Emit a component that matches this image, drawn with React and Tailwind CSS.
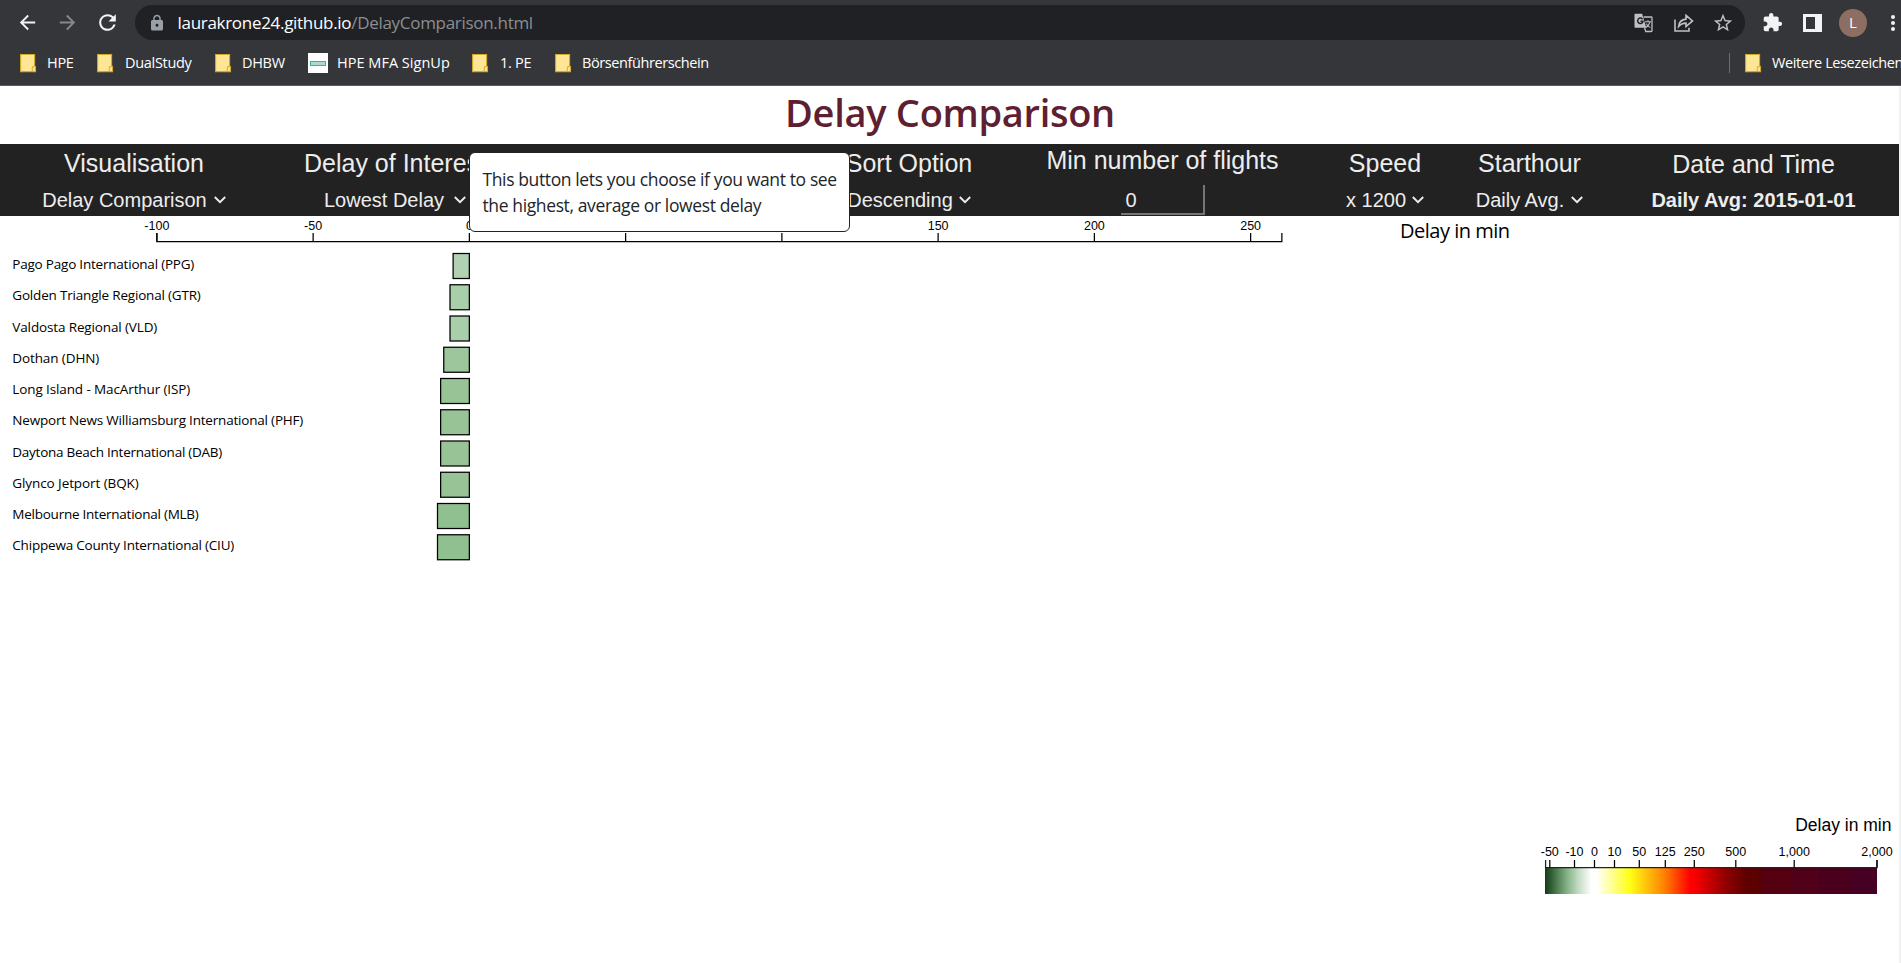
import React from "react";
import { MdArrowBack, MdArrowForward, MdRefresh, MdLock, MdStarBorder, MdExtension } from "react-icons/md";

const UI = "font-['Open_Sans','Noto_Sans',sans-serif]";
const ARIAL = "font-['Liberation_Sans',Arial,sans-serif]";

function FolderIcon() {
  return (
    <svg width="17" height="20" viewBox="0 0 17 20" className="shrink-0">
      <path d="M.6 1.5h14V13l.9.6v5H.6z" fill="#ffe694" stroke="#d2aa2c" strokeWidth="1.1" />
      <path d="M12.3 18.6v-3.4c0-1.4 1.2-1.8 2.3-1.8" fill="none" stroke="#d9b136" strokeWidth="1.1" />
    </svg>
  );
}

function SiteIcon() {
  return (
    <span className="flex h-5 w-5 shrink-0 items-center justify-center bg-white">
      <span className="h-[5px] w-4 border border-[#35b89a] bg-[#a5dccf]" />
    </span>
  );
}

function TranslateIcon() {
  return (
    <svg width="19" height="20" viewBox="0 0 19 20" className="shrink-0">
      <path d="M1.5.8h6.6l4.2 14H1.5C.9 14.800.5 14.300.5 13.800V1.800C.5 1.200.9.8 1.500.8z" fill="#bdc1c6" />
      <path d="M9.600 4h7.600c.5 0 .8.300.8.8v12.900c0 .5-.3.8-.8.8h-5.400l-1.300-3.700" fill="none" stroke="#bdc1c6" strokeWidth="1.300" />
      <path d="M8.500 6.200A2.700 2.700 0 1 0 9 8.300H6.500" fill="none" stroke="#202124" strokeWidth="1.500" />
      <path d="M11 8.800h6M14 7.300v1.500M16 8.900c-.6 2.300-2 4.200-4 5.600M12.300 10.600c.8 1.900 2.200 3.300 4 4" fill="none" stroke="#bdc1c6" strokeWidth="1.100" />
    </svg>
  );
}

function ShareIcon() {
  return (
    <svg width="20" height="18" viewBox="0 0 20 18" fill="none" stroke="#bdc1c6" strokeWidth="1.600" className="shrink-0">
      <path d="M1 5.500V17h14v-3.300" />
      <path d="M4.600 12.500c.4-4.500 3-7 7.400-7.400V1.300l6.500 5.600-6.500 5.600V9.100c-3.200.1-5.600 1.200-7.400 3.400z" />
    </svg>
  );
}

const bookmarks = [
  { label: "HPE", cls: "w-[77px] gap-[10px] tracking-[-0.3px]" },
  { label: "DualStudy", cls: "w-[118px] gap-[11px] tracking-[-0.3px]" },
  { label: "DHBW", cls: "w-[93px] gap-[10px] tracking-[-0.3px]" },
  { label: "HPE MFA SignUp", cls: "w-[164px] gap-[9px] tracking-[0.02px]", site: true },
  { label: "1. PE", cls: "w-[83px] gap-[11px] tracking-[-0.3px]" },
  { label: "Börsenführerschein", cls: "w-[170px] gap-[10px] tracking-[-0.4px]" },
];

function BrowserChrome() {
  return (
    <div className={"h-[86px] border-b border-[#5d5a5e] bg-[#35363a] " + UI}>
      <div className="flex h-[45px] items-center">
        <div className="flex w-[135px] shrink-0 items-center pb-px pl-[16px]">
          <MdArrowBack className="size-[23px] text-[#f1f3f4]" />
          <MdArrowForward className="ml-[17px] size-[23px] text-[#87888b]" />
          <MdRefresh className="ml-[16px] size-[25px] text-[#f1f3f4]" />
        </div>
        <div className="flex h-[35px] w-[1610px] shrink-0 items-center rounded-full bg-[#202124] pl-[13px] pr-[11.500px]">
          <MdLock className="size-[18px] text-[#9aa0a6]" />
          <span className="ml-[11.500px] text-[17px] tracking-[-0.3px] text-[#8b8e92]">
            <span className="text-white">laurakrone24.github.io</span>/DelayComparison.html
          </span>
          <div className="ml-auto flex items-center">
            <TranslateIcon />
            <span className="ml-[21px]"><ShareIcon /></span>
            <MdStarBorder className="ml-[18px] size-[22px] text-[#bdc1c6]" />
          </div>
        </div>
        <MdExtension className="ml-[17px] size-[21px] shrink-0 text-[#f1f3f4]" />
        <svg width="19" height="18" viewBox="0 0 19 18" className="ml-[20px] shrink-0">
          <path d="M0 0h19v18H0zM3 3v12h9V3z" fill="#f1f3f4" fillRule="evenodd" />
        </svg>
        <span className="ml-[17px] flex size-7 shrink-0 items-center justify-center rounded-full bg-[#8d6e63] text-[15px] text-white">L</span>
        <svg width="4" height="16" viewBox="0 0 4 16" className="ml-[23.500px] shrink-0" fill="#f1f3f4">
          <circle cx="2" cy="2" r="2" />
          <circle cx="2" cy="8" r="2" />
          <circle cx="2" cy="14" r="2" />
        </svg>
      </div>
      <div className="flex h-9 items-center overflow-hidden pl-5 text-[14.500px] text-white">
        {bookmarks.map((b) => (
          <div key={b.label} className={"flex shrink-0 items-center whitespace-nowrap " + b.cls}>
            {b.site ? <SiteIcon /> : <FolderIcon />}
            <span>{b.label}</span>
          </div>
        ))}
        <div className="ml-[1004px] h-5 w-px shrink-0 bg-[#6b6c70]" />
        <div className="ml-[15px] flex shrink-0 items-center gap-[10px] whitespace-nowrap tracking-[-0.400px]">
          <FolderIcon />
          <span>Weitere Lesezeichen</span>
        </div>
      </div>
    </div>
  );
}

function Chevron() {
  return (
    <svg width="12" height="8" viewBox="0 0 12 8" className="shrink-0" fill="none" stroke="#ededed" strokeWidth="1.900">
      <path d="M.8 1l5.200 5.200L11.200 1" />
    </svg>
  );
}

function Control({ title, value, width, gap = "gap-[7px]" }) {
  return (
    <div className={"flex shrink-0 flex-col items-center whitespace-nowrap pt-[5px] " + width}>
      <div className="text-[25px] leading-[29px]">{title}</div>
      <div className={"mt-[9px] flex items-center text-[20px] leading-[26px] " + gap}>
        <span>{value}</span>
        <Chevron />
      </div>
    </div>
  );
}

function Toolbar() {
  return (
    <div className={"relative flex h-[72px] w-[1899px] bg-[#222] text-[#ededed] " + ARIAL}>
      <Control title="Visualisation" value="Delay Comparison" width="w-[268px]" />
      <Control title="Delay of Interest" value="Lowest Delay" width="w-[254px]" gap="gap-[10px]" />
      <div className="w-[287px] shrink-0" />
      <Control title="Sort Option" value="Descending" width="w-[200px]" gap="gap-[6px]" />
      <div className="flex w-[307px] shrink-0 flex-col items-center whitespace-nowrap pt-[2px]">
        <div className="text-[25px] leading-[29px]">Min number of flights</div>
        <div className="mt-[10px] h-[30px] w-[84px] border-r-2 border-b-2 border-[#767676] pl-[5px] text-[20px] leading-[30px]">0</div>
      </div>
      <Control title="Speed" value="x 1200" width="w-[138px]" gap="gap-[6px]" />
      <Control title="Starthour" value="Daily Avg." width="w-[151px]" />
      <div className="flex w-[294px] shrink-0 flex-col items-center whitespace-nowrap pt-[6px] pl-[3px]">
        <div className="text-[25px] leading-[29px]">Date and Time</div>
        <div className="mt-[8px] text-[20px] font-bold leading-[26px]">Daily Avg: 2015-01-01</div>
      </div>
      <div className={"absolute left-[469px] top-[8px] z-10 h-[80px] w-[381px] whitespace-nowrap rounded-[6px] border border-[#222] bg-white pl-[12.500px] pt-[13px] text-[17.500px] leading-[26.250px] tracking-[-0.380px] text-[#212529] " + UI}>
        This button lets you choose if you want to see
        <br />
        the highest, average or lowest delay
      </div>
    </div>
  );
}

const airports = [
  { name: "Pago Pago International (PPG)", len: 181, base: 269, v: 5, fill: "#b1d1b2" },
  { name: "Golden Triangle Regional (GTR)", len: 187.500, base: 300, v: 6, fill: "#a9ceaa" },
  { name: "Valdosta Regional (VLD)", len: 144, base: 332, v: 6, fill: "#a9ceaa" },
  { name: "Dothan (DHN)", len: 86, base: 363, v: 8, fill: "#9dc69d" },
  { name: "Long Island - MacArthur (ISP)", len: 177, base: 394, v: 9, fill: "#97c397" },
  { name: "Newport News Williamsburg International (PHF)", len: 290, base: 425, v: 9, fill: "#97c397" },
  { name: "Daytona Beach International (DAB)", len: 209, base: 457, v: 9, fill: "#97c397" },
  { name: "Glynco Jetport (BQK)", len: 125.500, base: 488, v: 9, fill: "#97c397" },
  { name: "Melbourne International (MLB)", len: 185.500, base: 519, v: 10, fill: "#90bf90" },
  { name: "Chippewa County International (CIU)", len: 221, base: 550, v: 10, fill: "#90bf90" },
];

const axisTicks = [-100, -50, 0, 50, 100, 150, 200, 250];

// Vertical positions are measured from the top of the window; the chart begins at y = 216.
function DelayChart() {
  return (
    <svg width="1899" height="384" viewBox="0 216 1899 384" className="block">
      <g className={ARIAL} fontSize="12.500" textAnchor="middle" fill="#000">
        <path d="M156.875 233V241.600H1281.875V233" fill="none" stroke="#000" strokeWidth="1.250" />
        {axisTicks.map((t) => (
          <g key={t}>
            <line x1={469.375 + t * 3.125} x2={469.375 + t * 3.125} y1="233" y2="241.600" stroke="#000" strokeWidth="1.250" />
            <text x={469.375 + t * 3.125} y="230">{t}</text>
          </g>
        ))}
      </g>
      <text x="1400" y="238" fontSize="20" textLength="110" className={UI}>Delay in min</text>
      {airports.map((a, i) => (
        <g key={a.name}>
          <text x="12.300" y={a.base} fontSize="13.500" textLength={a.len + 1} className={UI}>{a.name}</text>
          <rect x={468.750 - a.v * 3.125} y={253.500 + i * 31.250} width={a.v * 3.125 + 0.6} height="25" fill={a.fill} stroke="#000" strokeWidth="1.250" />
        </g>
      ))}
    </svg>
  );
}

const legendTicks = [
  [29.800, "-50"],
  [54.500, "-10"],
  [74.500, "0"],
  [94.500, "10"],
  [119.300, "50"],
  [145.300, "125"],
  [174.300, "250"],
  [215.800, "500"],
  [274.200, "1,000"],
  [357, "2,000"],
];

const legendStops = [
  [0, "#123c14"],
  [0.066, "#83b285"],
  [0.1, "#c3dac3"],
  [0.14, "#ffffff"],
  [0.155, "#ffffff"],
  [0.256, "#ffff14"],
  [0.36, "#ff8000"],
  [0.437, "#ff0000"],
  [0.446, "#ff0000"],
  [0.55, "#8c0000"],
  [0.605, "#600000"],
  [0.65, "#5a0000"],
  [0.651, "#540010"],
  [0.74, "#540010"],
  [0.741, "#500018"],
  [0.825, "#500018"],
  [0.826, "#4a001c"],
  [0.922, "#4a001c"],
  [0.923, "#460024"],
  [1, "#460024"],
];

function Legend() {
  return (
    <svg width="379" height="100" viewBox="0 0 379 100" className={"block " + ARIAL}>
      <defs>
        <linearGradient id="delayScale">
          {legendStops.map(([o, c]) => (
            <stop key={o} offset={o} stopColor={c} />
          ))}
        </linearGradient>
      </defs>
      <text x="371.500" y="31" fontSize="17.500" textAnchor="end">Delay in min</text>
      <rect x="25" y="68" width="332" height="26" fill="url(#delayScale)" />
      <path d="M25.600 60V67.600H357V60" fill="none" stroke="#222" strokeWidth="1.250" />
      {legendTicks.map(([x, label]) => (
        <g key={label}>
          <line x1={x} x2={x} y1="60" y2="67.600" stroke="#000" strokeWidth="1.250" />
          <text x={x} y="56" fontSize="12.500" textAnchor="middle">{label}</text>
        </g>
      ))}
    </svg>
  );
}

export default function App() {
  return (
    <div className="flex h-[963px] w-[1901px] flex-col overflow-hidden bg-white text-black">
      <BrowserChrome />
      <div className="flex flex-1">
        <div className="flex w-[1899px] flex-col">
          <h1 className={"h-[58px] pl-px text-center text-[38px] font-semibold leading-[52px] tracking-[-0.300px] text-[#5e2030] " + UI}>
            Delay Comparison
          </h1>
          <Toolbar />
          <DelayChart />
          <div className="mt-[200px] self-end">
            <Legend />
          </div>
        </div>
        <div className="w-[2px] bg-[#f1f1f1]" />
      </div>
    </div>
  );
}
